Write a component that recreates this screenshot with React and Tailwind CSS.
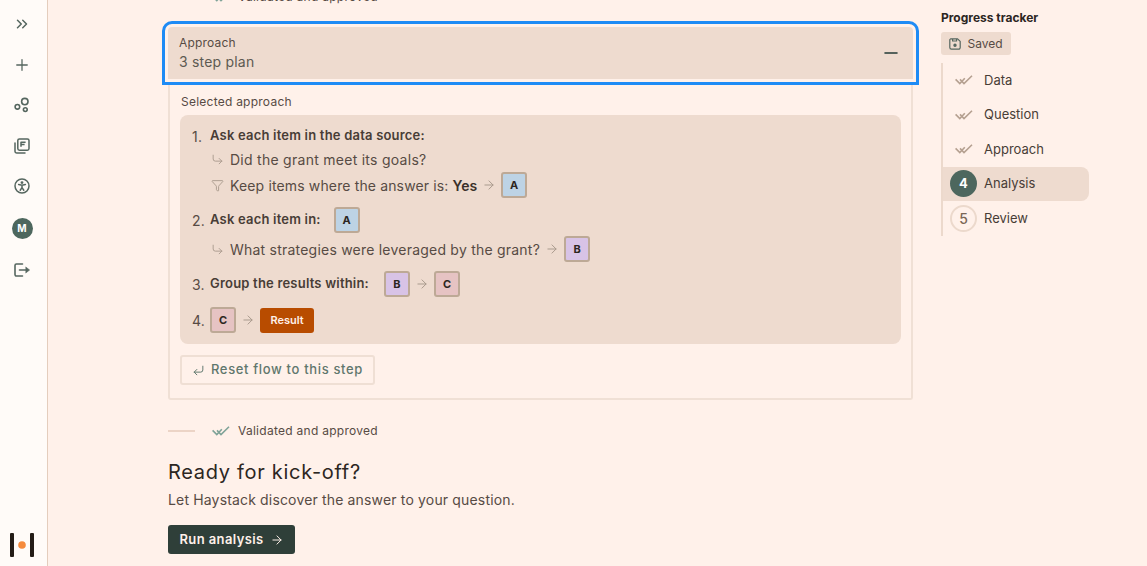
import { ChevronsRight, Plus, Minus, CornerDownRight, Filter, ArrowRight, CornerDownLeft } from 'lucide-react';

const Chip = ({ label, color }) => (
  <span className={`flex h-[26px] w-[26px] items-center justify-center rounded-[3px] border-2 border-[#bda996] text-[11px] font-bold tracking-normal text-[#2c2622] ${color}`}>
    {label}
  </span>
);

const Arrow = () => <ArrowRight size={14} strokeWidth={1.7} className="text-[#a99a8d]" />;

const Subdirectory = () => <CornerDownRight size={13} strokeWidth={1.7} className="text-[#a99a8d]" />;

const Bubbles = () => (
  <svg width="16" height="16" viewBox="0 0 16 16" fill="none" stroke="#55665f" strokeWidth="1.6">
    <circle cx="10.8" cy="4.6" r="3.2" />
    <circle cx="3.4" cy="9.8" r="2.3" />
    <circle cx="11.3" cy="12.6" r="1.9" />
  </svg>
);

const Accessibility = () => (
  <svg width="16" height="16" viewBox="0 0 16 16" fill="none" stroke="#55665f" strokeWidth="1.5" strokeLinecap="round">
    <circle cx="8" cy="8" r="7" />
    <circle cx="8" cy="4.6" r="0.7" fill="#55665f" />
    <path d="M4.6 6.4 8 7.2l3.4-.8M8 7.2v2.4M8 9.6l-1.8 2.6M8 9.6l1.8 2.6" />
  </svg>
);

const Pages = () => (
  <svg width="16" height="16" viewBox="0 0 16 16" fill="none" stroke="#55665f" strokeWidth="1.5" strokeLinejoin="round">
    <path d="M1 5v8.2A1.8 1.8 0 0 0 2.8 15H11" strokeLinecap="round" />
    <rect x="3.8" y="1" width="11.2" height="11.2" rx="1.6" />
    <path d="M7 8.8V4.2h4.6M7 6.4h3.6" />
  </svg>
);

const Exit = () => (
  <svg width="16" height="14" viewBox="0 0 16 14" fill="none" stroke="#55665f" strokeWidth="1.6" strokeLinecap="round" strokeLinejoin="round">
    <path d="M8.5 1H2.4A1.4 1.4 0 0 0 1 2.4v9.2A1.4 1.4 0 0 0 2.4 13h6.1" />
    <path d="M5.5 7H12" />
    <path d="M12 4.2 15.6 7 12 9.8Z" fill="#55665f" strokeWidth="0.6" />
  </svg>
);

const Disk = () => (
  <svg width="12" height="12" viewBox="0 0 12 12" fill="none" stroke="#55665f" strokeWidth="1.2" strokeLinejoin="round">
    <path d="M1.6.8h7L11.2 3.4v6.2a1.6 1.6 0 0 1-1.6 1.6H2.4A1.6 1.6 0 0 1 .8 9.6V1.6Z" />
    <path d="M3.6 1v2h4V1" />
    <circle cx="6" cy="7.2" r="1.1" fill="#55665f" />
  </svg>
);

const DoubleCheck = ({ color }) => (
  <svg width="18" height="10" viewBox="0 0 18 10" fill="none" stroke={color} strokeWidth="1.6">
    <path d="M.6 4.4 4.8 8.6 9.8 3.2" />
    <path d="M5 4.4 9 8.6 17 .8" />
  </svg>
);

const Logo = () => (
  <svg width="24" height="24" viewBox="0 0 24 24">
    <rect x="0" y="0" width="4" height="24" rx="1" fill="#241c17" />
    <rect x="20" y="0" width="4" height="24" rx="1" fill="#241c17" />
    <circle cx="12" cy="12" r="3.8" fill="#f58a3c" />
  </svg>
);

const SideIcon = ({ children }) => <div className="flex h-[40.5px] items-center justify-center">{children}</div>;

const Sidebar = () => (
  <aside className="flex h-full w-[48px] flex-none flex-col items-center border-r border-[#e4cdbd] bg-[#fffbf8] pr-[3px]">
    <div className="mt-[4px] flex flex-col items-center">
      <SideIcon><ChevronsRight size={18} strokeWidth={2} className="text-[#55665f]" /></SideIcon>
      <SideIcon><Plus size={18} strokeWidth={1.7} className="text-[#55665f]" /></SideIcon>
      <SideIcon><Bubbles /></SideIcon>
      <SideIcon><Pages /></SideIcon>
      <SideIcon><Accessibility /></SideIcon>
      <div className="flex h-[43px] items-center justify-center">
        <div className="flex h-[21px] w-[21px] items-center justify-center rounded-full bg-[#4d675e] text-[10px] font-bold text-white">M</div>
      </div>
      <SideIcon><Exit /></SideIcon>
    </div>
    <div className="mt-auto mb-[9px]">
      <Logo />
    </div>
  </aside>
);

const Plan = () => (
  <div className="flex flex-col rounded-lg bg-[#eedbcf] pl-[12px] pt-[8px] pb-[11px] text-[14px] tracking-[0.22px] text-[#574b44]">
    <div className="flex h-[26px] items-center">
      <span className="w-[18px]">1.</span>
      <span className="text-[13px] font-semibold tracking-[0.2px] text-[#483d36]">Ask each item in the data source:</span>
    </div>
    <div className="flex h-[20px] items-center gap-[6px] pl-[19px]">
      <Subdirectory />
      <span className="tracking-[0.27px]">Did the grant meet its goals?</span>
    </div>
    <div className="mt-[3px] flex h-[26px] items-center pl-[19px]">
      <Filter size={13} strokeWidth={1.7} className="mr-[6px] text-[#a99a8d]" />
      <span className="tracking-[0.14px]">Keep items where the answer is:</span>
      <span className="ml-1 font-semibold tracking-normal text-[#3a302a]">Yes</span>
      <span className="mx-[5px]"><Arrow /></span>
      <Chip label="A" color="bg-[#bdd3e5]" />
    </div>
    <div className="mt-[9px] flex h-[26px] items-center">
      <span className="w-[18px]">2.</span>
      <span className="text-[13px] font-semibold tracking-[0.2px] text-[#483d36]">Ask each item in:</span>
      <span className="ml-[13px]"><Chip label="A" color="bg-[#bdd3e5]" /></span>
    </div>
    <div className="mt-[3px] flex h-[26px] items-center pl-[19px]">
      <span className="mr-[6px]"><Subdirectory /></span>
      <span>What strategies were leveraged by the grant?</span>
      <span className="mx-[5px]"><Arrow /></span>
      <Chip label="B" color="bg-[#d8c3e6]" />
    </div>
    <div className="mt-[9px] flex h-[26px] items-center">
      <span className="w-[18px]">3.</span>
      <span className="text-[13px] font-semibold tracking-[0.2px] text-[#483d36]">Group the results within:</span>
      <span className="ml-[15px]"><Chip label="B" color="bg-[#d8c3e6]" /></span>
      <span className="mx-[5px]"><Arrow /></span>
      <Chip label="C" color="bg-[#e6c3c3]" />
    </div>
    <div className="mt-[10px] flex h-[26px] items-center">
      <span className="w-[18px]">4.</span>
      <Chip label="C" color="bg-[#e6c3c3]" />
      <span className="mx-[5px]"><Arrow /></span>
      <span className="flex h-[25px] w-[54px] items-center justify-center rounded-[3px] bg-[#b84c00] text-[11px] font-semibold tracking-normal text-[#fff1ea]">Result</span>
    </div>
  </div>
);

const Validated = () => (
  <div className="flex h-[18px] items-center">
    <span className="h-[2px] w-[27px] bg-[#ecd4c6]" />
    <span className="ml-[17px]"><DoubleCheck color="#7fa398" /></span>
    <span className="ml-[8px] text-xs tracking-[0.27px] text-[#574b44]">Validated and approved</span>
  </div>
);

const Main = () => (
  <main className="w-[745px] flex-none">
    <div className="-mt-[12px]">
      <Validated />
    </div>
    <div className="-mx-[6px] mt-[15px] rounded-t-[10px] border-[3px] border-[#1e8bf5] p-[3px]">
      <div className="flex h-[52px] items-center justify-between rounded-t-[4px] bg-[#eedbcf] pl-[11px] pr-[12px]">
        <div className="flex flex-col">
          <span className="text-xs leading-[18px] tracking-[0.2px] text-[#574b44]">Approach</span>
          <span className="text-[14px] leading-[20px] tracking-[0.2px] text-[#5d5a52]">3 step plan</span>
        </div>
        <Minus size={20} strokeWidth={2.4} className="text-[#55625c]" />
      </div>
    </div>
    <div className="flex h-[315px] flex-col rounded-b-[3px] border-x-2 border-b-2 border-[#f0e0d5] px-[10px]">
      <div className="mt-[8px] mb-[4px] ml-[1px] text-xs leading-[18px] tracking-[0.24px] text-[#574b44]">Selected approach</div>
      <Plan />
      <button className="mt-[11px] flex h-[30px] w-[195px] items-center justify-center gap-[6px] rounded-[3px] border-2 border-[#efdfd4] text-[13px] font-medium tracking-[0.65px] text-[#5f776d]">
        <CornerDownLeft size={13} strokeWidth={1.8} />
        Reset flow to this step
      </button>
    </div>
    <div className="mt-[22px]">
      <Validated />
    </div>
    <h2 className="mt-[18px] text-[20px] leading-[28px] tracking-[0.7px] text-[#2c2622]">Ready for kick-off?</h2>
    <p className="mt-[4px] text-[14px] leading-[20px] tracking-[0.16px] text-[#574b44]">Let Haystack discover the answer to your question.</p>
    <button className="mt-[15px] flex h-[29px] w-[127px] items-center justify-center gap-[6px] rounded-[3px] bg-[#2f3f39] text-[13px] font-semibold tracking-[0.4px] text-[#fff1ea]">
      Run analysis
      <ArrowRight size={14} strokeWidth={1.7} />
    </button>
  </main>
);

const steps = ['Data', 'Question', 'Approach'];

const Tracker = () => (
  <div className="ml-[28px] w-[148px] flex-none text-[#483d36]">
    <div className="mt-[10px] text-xs font-bold leading-[16px] text-[#2c2622]">Progress tracker</div>
    <div className="mt-[6px] flex h-[23px] w-[70px] items-center justify-center gap-[6px] rounded-[3px] bg-[#eedbcf] text-xs text-[#574b44]">
      <Disk />
      Saved
    </div>
    <div className="mt-[8px] flex flex-col border-l-2 border-[#ecd9cc]">
      {steps.map((step) => (
        <div key={step} className="flex h-[34.5px] items-center text-[13px]">
          <span className="ml-[12px] mr-[11px]"><DoubleCheck color="#b5a090" /></span>
          {step}
        </div>
      ))}
      <div className="flex h-[34.5px] items-center rounded-r-lg bg-[#eedbcf] text-[13px]">
        <span className="ml-[7px] mr-[7px] flex h-[27px] w-[27px] items-center justify-center rounded-full bg-[#4d675e] text-[13px] font-bold text-white">4</span>
        Analysis
      </div>
      <div className="flex h-[34.5px] items-center text-[13px]">
        <span className="ml-[7px] mr-[7px] flex h-[27px] w-[27px] items-center justify-center rounded-full border-2 border-[#ecd9cc] text-[14px] font-medium text-[#7a6656]">5</span>
        Review
      </div>
    </div>
  </div>
);

export default function App() {
  return (
    <div className="flex h-[566px] w-[1147px] overflow-hidden bg-[#fff1ea] font-['Inter',sans-serif]">
      <Sidebar />
      <div className="ml-[120px] flex items-start">
        <Main />
        <Tracker />
      </div>
    </div>
  );
}
